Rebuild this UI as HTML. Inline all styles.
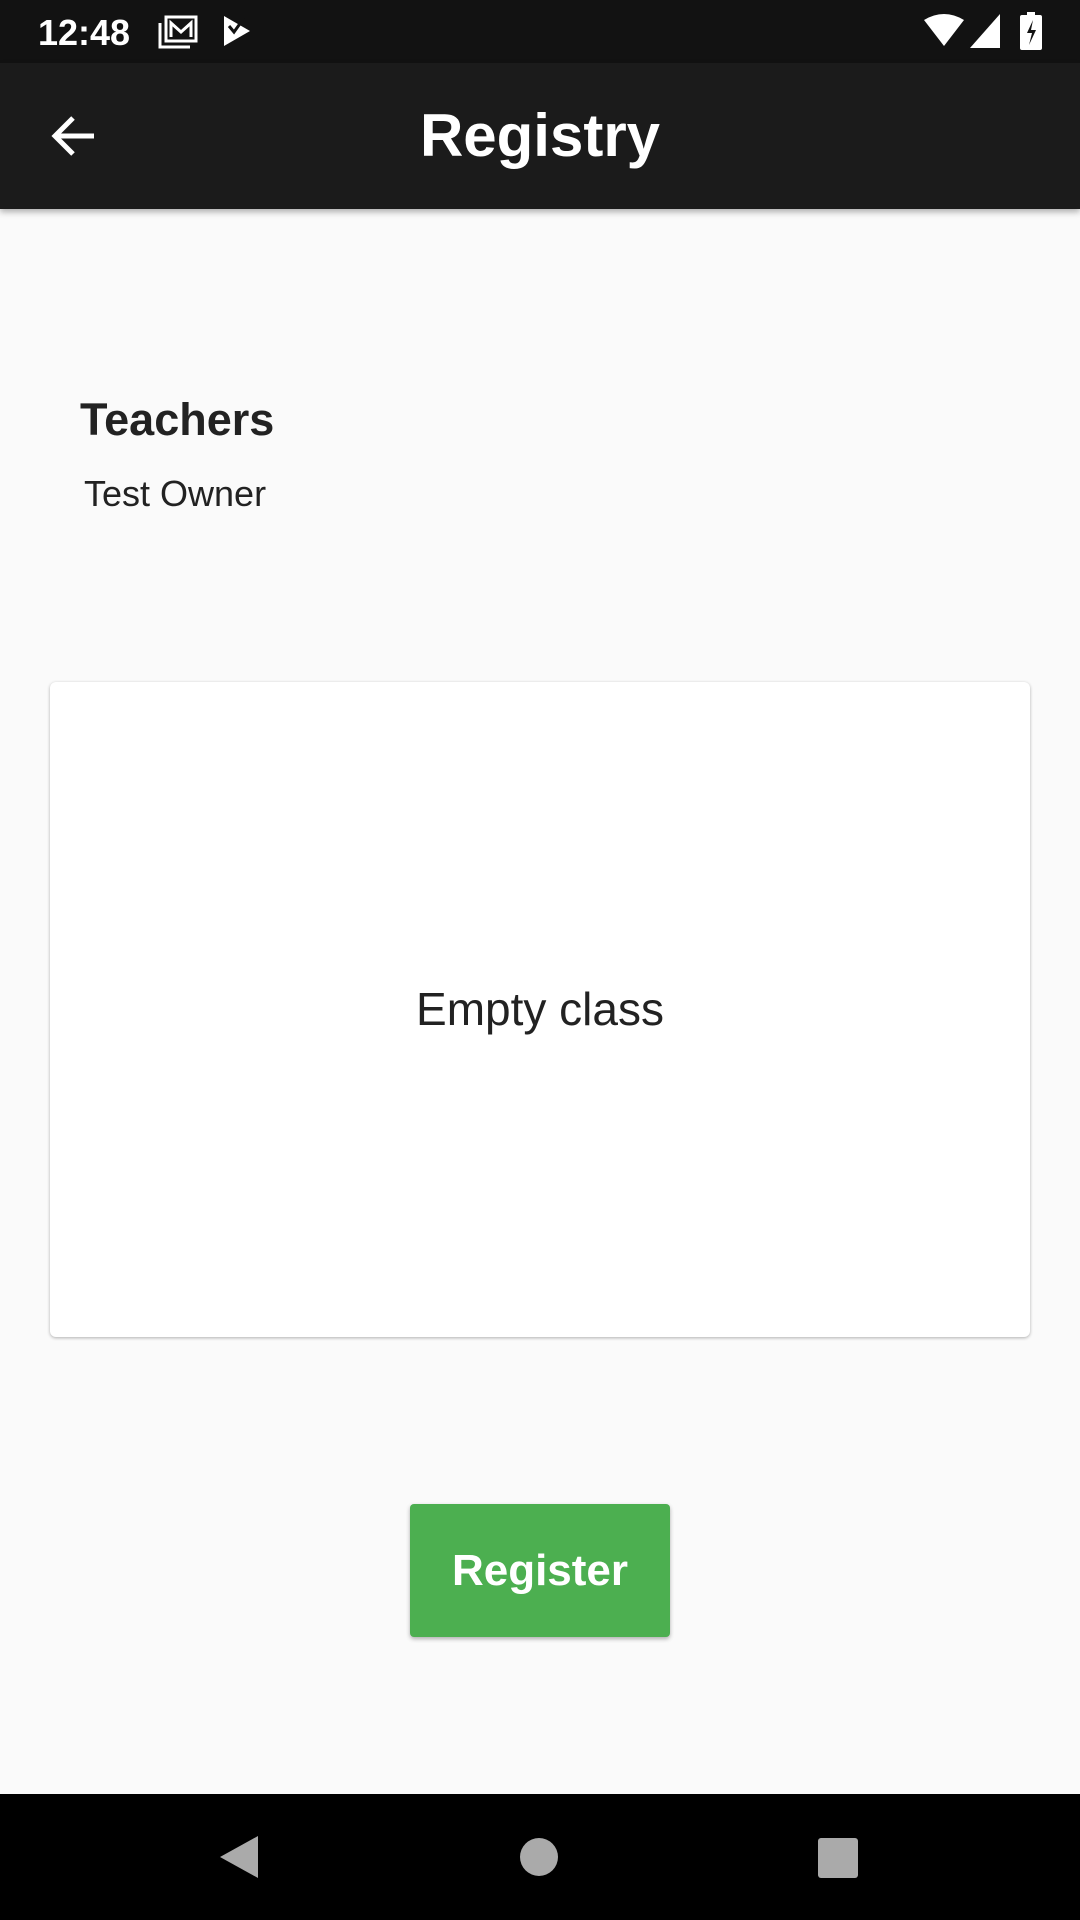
<!DOCTYPE html>
<html><head><meta charset="utf-8"><style>
*{margin:0;padding:0;box-sizing:border-box}
body{width:1080px;height:1920px;background:#fafafa;font-family:"Liberation Sans",Roboto,sans-serif;position:relative;overflow:hidden}
.sb{position:absolute;top:0;left:0;width:1080px;height:63px;background:#121212;color:#fff}
.ab{position:absolute;top:63px;left:0;width:1080px;height:146px;background:#1b1b1b;box-shadow:0 3px 6px rgba(0,0,0,.3)}
.t{position:absolute;white-space:nowrap}
.card{position:absolute;left:50px;top:682px;width:980px;height:655px;background:#fff;border-radius:6px;box-shadow:0 1px 3px rgba(0,0,0,.3)}
.btn{position:absolute;left:410px;top:1504px;width:260px;height:133px;background:#4caf50;border-radius:4px;box-shadow:0 2px 4px rgba(0,0,0,.3);color:#fff;font-size:44px;font-weight:bold;text-align:center;line-height:133px}
.nav{position:absolute;top:1794px;left:0;width:1080px;height:126px;background:#000}
</style></head><body>
<div class="sb">
<div class="t" style="left:38px;top:12px;font-size:36px;font-weight:bold">12:48</div>
<svg style="position:absolute;left:158px;top:15px" width="40" height="34" viewBox="0 0 40 34"><path d="M2 8v24h30" fill="none" stroke="#fff" stroke-width="3"/><rect x="8" y="2" width="30" height="24" fill="none" stroke="#fff" stroke-width="3"/><path d="M13 22V8l10 9 10-9v14" fill="none" stroke="#fff" stroke-width="3"/></svg>
<svg style="position:absolute;left:222px;top:14px" width="30" height="34" viewBox="0 0 30 34"><path d="M2 2v30l26-15z" fill="#fff"/><path d="M7 12l5 6 10-14" fill="none" stroke="#121212" stroke-width="3"/></svg>
<svg style="position:absolute;left:924px;top:14px" width="40" height="34" viewBox="0 0 40 34"><path d="M0 6Q20-6 40 6L20 32z" fill="#fff"/></svg>
<svg style="position:absolute;left:970px;top:14px" width="32" height="34" viewBox="0 0 32 34"><path d="M30 0v34H0z" fill="#fff"/></svg>
<svg style="position:absolute;left:1020px;top:12px" width="22" height="38" viewBox="0 0 22 38"><rect x="7" y="0" width="8" height="4" fill="#fff"/><rect x="0" y="3" width="22" height="35" rx="2" fill="#fff"/><path d="M13 8l-6 13h5l-3 12 7-15h-5z" fill="#121212"/></svg>
</div>
<div class="ab">
<svg style="position:absolute;left:50px;top:52px" width="46" height="42" viewBox="0 0 46 42"><path d="M44 21H6M23 3L5 21l18 18" fill="none" stroke="#fff" stroke-width="5"/></svg>
<div class="t" style="left:0;width:1080px;text-align:center;top:38px;font-size:60px;font-weight:bold;color:#fff">Registry</div>
</div>
<div class="t" style="left:80px;top:394px;font-size:45px;font-weight:bold;color:#222">Teachers</div>
<div class="t" style="left:84px;top:473px;font-size:36px;color:#222">Test Owner</div>
<div class="card"><div class="t" style="left:0;width:980px;text-align:center;top:300px;font-size:46px;color:#222">Empty class</div></div>
<div class="btn">Register</div>
<div class="nav">
<svg style="position:absolute;left:218px;top:40px" width="42" height="46" viewBox="0 0 42 46"><path d="M40 2v42L2 23z" fill="#aaa"/></svg>
<div style="position:absolute;left:520px;top:44px;width:38px;height:38px;border-radius:50%;background:#aaa"></div>
<div style="position:absolute;left:818px;top:44px;width:40px;height:40px;border-radius:3px;background:#aaa"></div>
</div>
</body></html>
